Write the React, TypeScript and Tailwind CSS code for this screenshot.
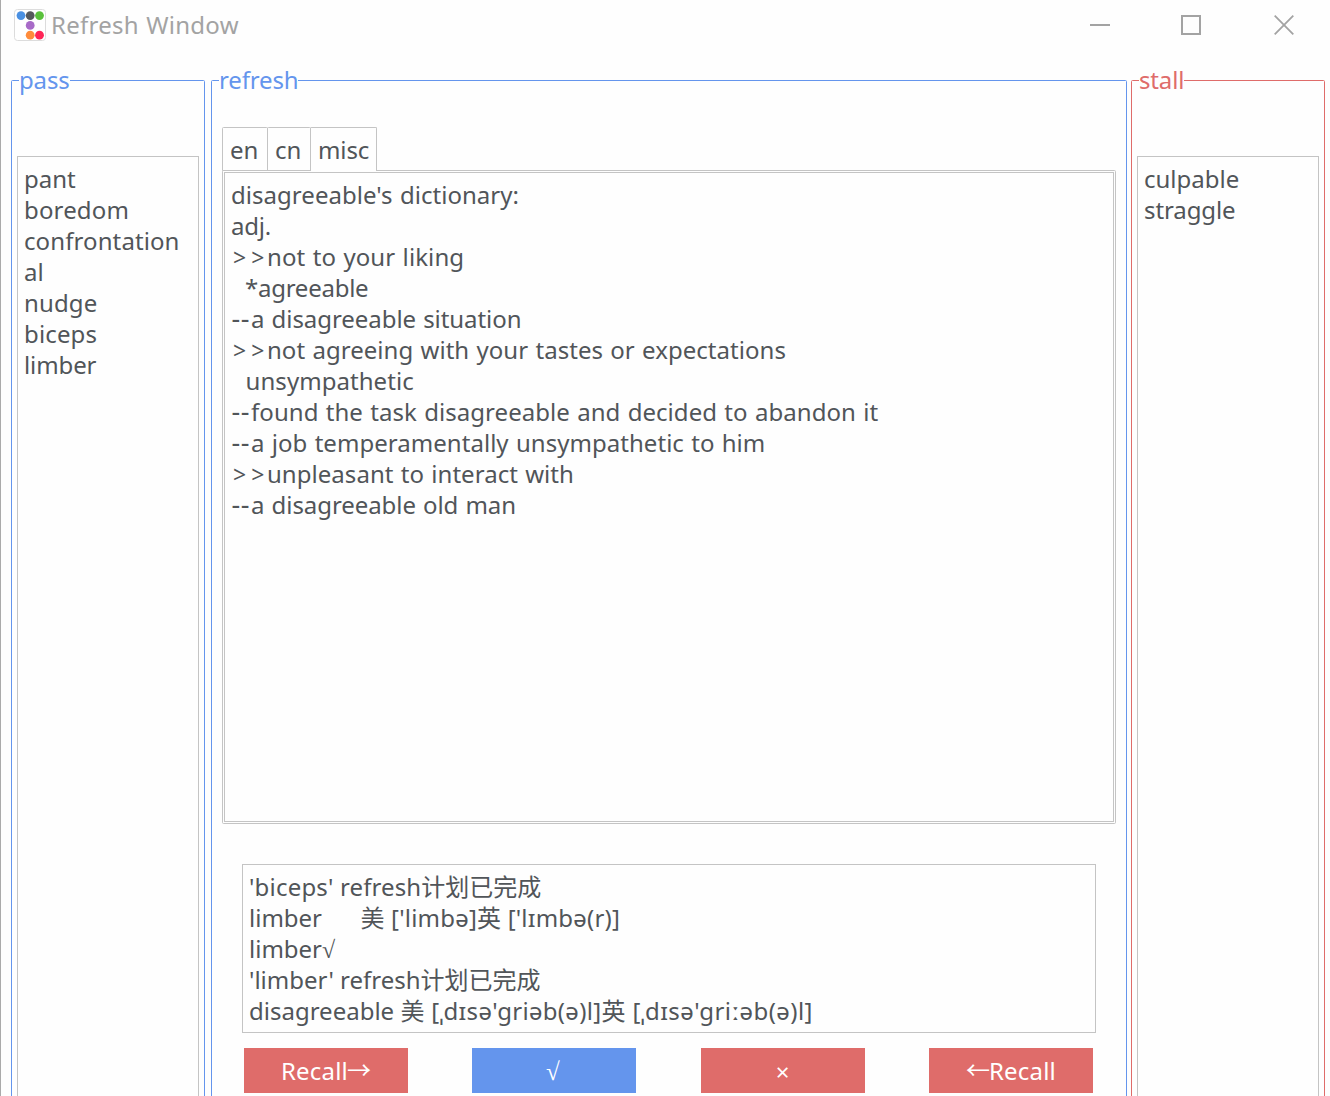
import React from "react";

type Segment = { text: string; style?: string };
type TextLine = Segment[];

const plain = (text: string, style?: string): TextLine => [{ text, style }];
const sense = (text: string, style?: string): TextLine => [
  { text: ">>", style: "inline-block w-[36px] pl-[2px] text-[23px] leading-[25px] tracking-[5px]" },
  { text, style },
];
const example = (text: string, style?: string): TextLine => [
  { text: "--", style: "inline-block w-[20px] pl-[0.5px] text-[27px] leading-[25px] tracking-[0.5px]" },
  { text, style },
];

const passed: TextLine[] = [
  plain("pant"),
  plain("boredom", "tracking-[0.15px]"),
  plain("confrontation", "tracking-[0.1px]"),
  plain("al"),
  plain("nudge", "tracking-[0.15px]"),
  plain("biceps", "tracking-[0.15px]"),
  plain("limber", "tracking-[-0.1px]"),
];

const stalled: TextLine[] = [plain("culpable"), plain("straggle", "tracking-[-0.1px]")];

const dictionary: TextLine[] = [
  plain("disagreeable's dictionary:", "tracking-[0.04px]"),
  plain("adj.", "tracking-[-0.2px]"),
  sense("not to your liking", "tracking-[0.1px]"),
  plain("  *agreeable", "tracking-[-0.25px]"),
  example("a disagreeable situation", "tracking-[-0.06px]"),
  sense("not agreeing with your tastes or expectations", "tracking-[0.04px]"),
  plain("  unsympathetic", "tracking-[0.05px]"),
  example("found the task disagreeable and decided to abandon it", "tracking-[0.05px]"),
  example("a job temperamentally unsympathetic to him", "tracking-[0.04px]"),
  sense("unpleasant to interact with", "tracking-[0.04px]"),
  example("a disagreeable old man", "tracking-[-0.07px]"),
];

const log: TextLine[] = [
  [
    { text: "'biceps'", style: "tracking-[0.2px]" },
    { text: " refresh", style: "tracking-[0.1px]" },
    { text: "计划已完成" },
  ],
  [
    { text: "limber      " },
    { text: "美 ['limbə]英 ['lɪmbə(r)]", style: "pl-px tracking-[0.2px]" },
  ],
  [{ text: "limber" }, { text: "√", style: "font-['Liberation_Serif',serif]" }],
  plain("'limber' refresh计划已完成"),
  [
    { text: "disagreeable " },
    { text: "美 [ˌdɪsə'griəb(ə)l]", style: "tracking-[0.3px]" },
    { text: "英 [ˌdɪsə'griːəb(ə)l]", style: "tracking-[0.42px]" },
  ],
];

function Lines({ lines }: { lines: TextLine[] }) {
  return (
    <>
      {lines.map((line, i) => (
        <div key={i} className="h-[31px] whitespace-pre">
          {line.map((s, j) => (
            <span key={j} className={s.style}>{s.text}</span>
          ))}
        </div>
      ))}
    </>
  );
}

function Group({ label, color, width, children }: { label: string; color: string; width: string; children: React.ReactNode }) {
  return (
    <section className={`relative h-[1030px] shrink-0 rounded-[1.5px] border ${color} ${width}`}>
      <span className="absolute -top-[17px] left-[7px] h-[31px] bg-[#fefefe] tracking-[-0.15px]">{label}</span>
      {children}
    </section>
  );
}

function ActionButton({ color, children }: { color: string; children: React.ReactNode }) {
  return <button className={`flex h-[45px] w-[164px] items-center justify-center text-white ${color}`}>{children}</button>;
}

export default function App() {
  return (
    <main className="h-[1096px] w-[1330px] overflow-hidden border-l border-[#aaaaaa] bg-[#fefefe] font-['Noto_Sans','Noto_Sans_CJK_SC',sans-serif] text-[24px] leading-[31px] text-[#515559]">
      <header className="flex h-[50px] items-center pl-[13px] text-[#a3a3a3]">
        <svg width="32" height="32" viewBox="0 0 32 32" className="shrink-0">
          <rect x="0.5" y="0.5" width="31" height="31" rx="3" fill="#fff" stroke="#dcdcdc" />
          <circle cx="7" cy="6.6" r="4.4" fill="#4a90e2" />
          <circle cx="16.2" cy="6.6" r="4.4" fill="#55585c" />
          <circle cx="25.5" cy="6.6" r="4.4" fill="#5ac13b" />
          <circle cx="16.2" cy="16.4" r="4.4" fill="#a86bc8" />
          <circle cx="16.2" cy="26.2" r="4.4" fill="#ff8c3b" />
          <circle cx="25.5" cy="26.2" r="4.4" fill="#ff2456" />
        </svg>
        <h1 className="mb-[2px] ml-[5px] whitespace-nowrap tracking-[0.25px] [word-spacing:1px]">Refresh Window</h1>
        <div className="ml-auto mr-[36px] flex">
          <svg width="20" height="20" className="mr-[71px]"><path d="M0 10H20" stroke="#a3a3a3" strokeWidth="2" /></svg>
          <svg width="20" height="20" className="mr-[73px]"><rect x="1" y="1" width="18" height="18" fill="none" stroke="#a3a3a3" strokeWidth="2" /></svg>
          <svg width="20" height="20"><path d="M0.7 0.7L19.3 19.3M19.3 0.7L0.7 19.3" stroke="#a3a3a3" strokeWidth="1.8" /></svg>
        </div>
      </header>
      <div className="flex pl-[10px] pt-[30px]">
        <Group label="pass" color="border-[#6495ed] text-[#6495ed]" width="w-[194px]">
          <div className="ml-[5px] mt-[75px] h-[960px] w-[182px] border border-[#c4c4c4] pl-[6px] pt-[6px] text-[#515559]">
            <Lines lines={passed} />
          </div>
        </Group>
        <div className="w-[6px] shrink-0" />
        <Group label="refresh" color="border-[#6495ed] text-[#6495ed]" width="w-[916px]">
          <div className="px-[10px] pt-[46px] text-[#515559]">
            <div className="relative z-10 flex h-[44px]">
              <div className="h-[44px] w-[46px] rounded-t-[1.5px] border border-[#c4c4c4] pl-[7px] pt-[6px]">en</div>
              <div className="-ml-px h-[44px] w-[44px] rounded-t-[1.5px] border border-[#c4c4c4] pl-[7px] pt-[6px]">cn</div>
              <div className="-ml-px h-[44px] w-[67px] rounded-t-[1.5px] border border-b-0 border-[#c4c4c4] bg-[#fefefe] pl-[7px] pt-[6px] tracking-[-0.1px]">misc</div>
            </div>
            <div className="-mt-px h-[654px] w-[894px] rounded-[1.5px] border border-[#c4c4c4] p-px">
              <div className="h-[650px] border border-[#c4c4c4] pl-[6px] pt-[6px] [word-spacing:1px]">
                <Lines lines={dictionary} />
              </div>
            </div>
            <div className="ml-[20px] mt-[40px] h-[169px] w-[854px] border border-[#c4c4c4] pl-[6px] pt-[6px]">
              <Lines lines={log} />
            </div>
            <div className="ml-[22px] mt-[15px] flex w-[849px] justify-between">
              <ActionButton color="bg-[#df6c6a]">
                <span className="mb-px tracking-[0.2px]">Recall</span>
                <span className="-ml-px mb-[2px]">→</span>
              </ActionButton>
              <ActionButton color="bg-[#6495ed]">
                <span className="mr-[3px] mt-px font-['Liberation_Serif',serif] text-[25px]">√</span>
              </ActionButton>
              <ActionButton color="bg-[#df6c6a]">
                <span className="mt-px">×</span>
              </ActionButton>
              <ActionButton color="bg-[#df6c6a]">
                <span className="-mr-px mb-[2px]">←</span>
                <span className="mb-px tracking-[0.2px]">Recall</span>
              </ActionButton>
            </div>
          </div>
        </Group>
        <div className="w-[4px] shrink-0" />
        <Group label="stall" color="border-[#df6c6a] text-[#df6c6a]" width="w-[194px]">
          <div className="ml-[5px] mt-[75px] h-[960px] w-[182px] border border-[#c4c4c4] pl-[6px] pt-[6px] text-[#515559]">
            <Lines lines={stalled} />
          </div>
        </Group>
      </div>
    </main>
  );
}
